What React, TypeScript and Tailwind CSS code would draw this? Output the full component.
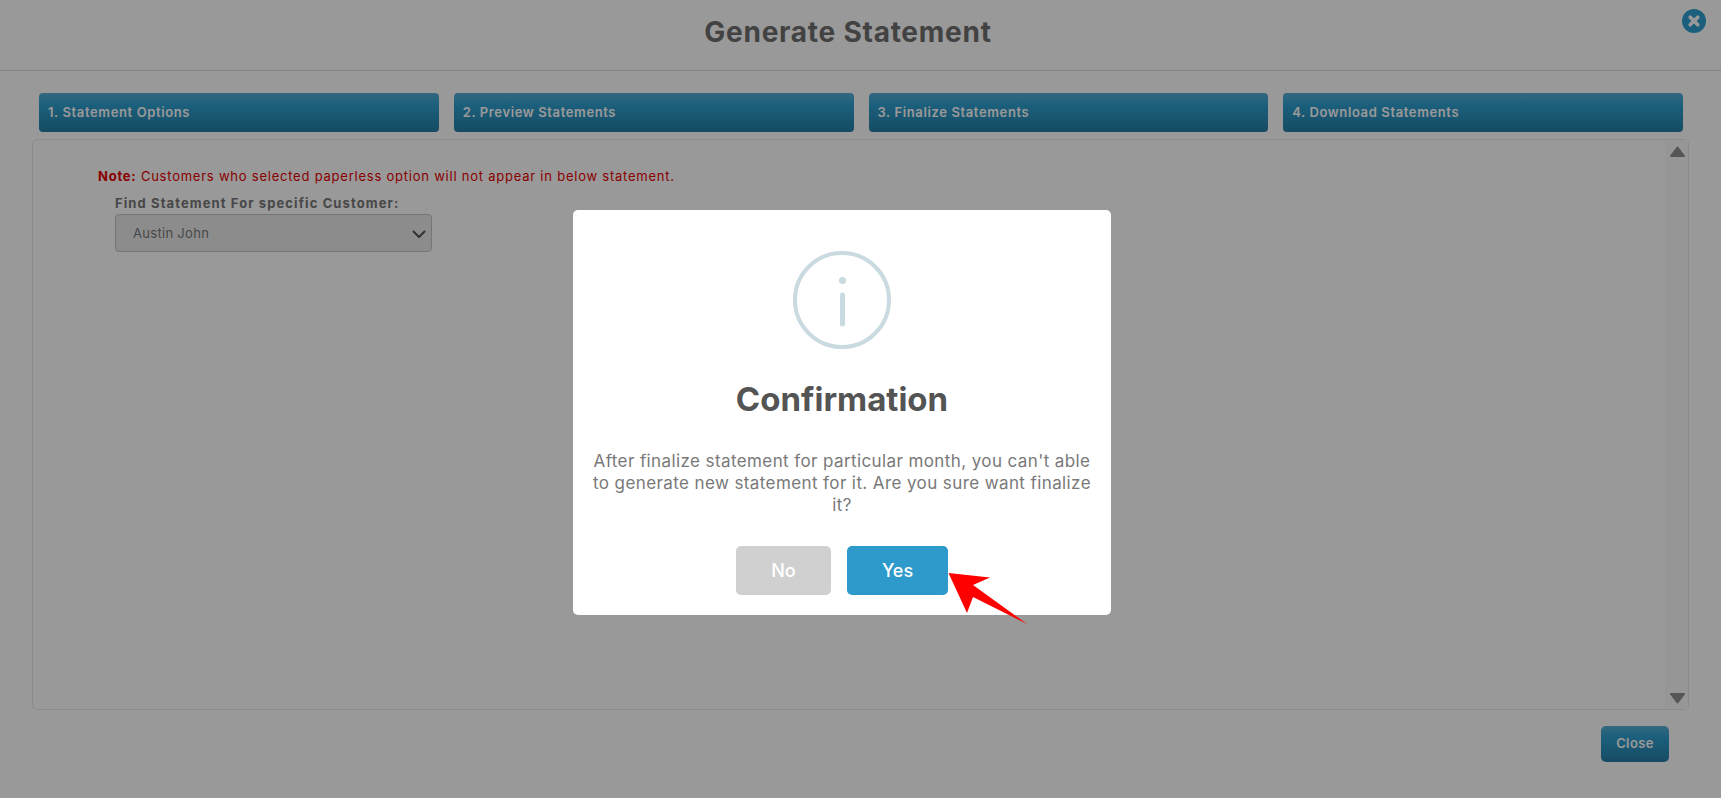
import React from "react";

const tabs = ["1. Statement Options", "2. Preview Statements", "3. Finalize Statements", "4. Download Statements"];

export default function App() {
  return (
    <div className="relative h-[798px] w-[1721px] overflow-hidden bg-white font-['Inter','Liberation_Sans',sans-serif] text-[#666]">
      <header className="flex h-[71px] items-start justify-center border-b border-[#d9d9d9] pt-[15px] pr-[25px]">
        <h1 className="text-[28px] leading-[34px] font-bold tracking-[0.75px] text-[#6f6f6f]">Generate Statement</h1>
        <button className="absolute top-[9px] left-[1682px] flex h-6 w-6 items-center justify-center rounded-full bg-[#2f9fd0]">
          <svg width="14" height="14" viewBox="0 0 14 14">
            <path d="M3.2 3.2 10.8 10.8M10.8 3.2 3.2 10.8" stroke="#fff" strokeWidth="3.6" strokeLinecap="round" />
          </svg>
        </button>
      </header>

      <div className="flex flex-col pt-[22px] pr-[32px] pl-[32px]">
        <div className="ml-[7px] mr-[6px] grid grid-cols-4 gap-[15px]">
          {tabs.map((t) => (
            <div
              key={t}
              className="flex h-[39px] items-center rounded-[4px] bg-gradient-to-b from-[#56aed4] via-[#2fa0d0] via-[30%] to-[#257da5] pl-[9px] text-[13px] font-semibold tracking-[0.62px] text-white"
            >
              {t}
            </div>
          ))}
        </div>

        <div className="mt-[7px] flex h-[571px] rounded-[5px] border border-[#e8e8e8]">
          <div className="flex-1 pt-[27px] pl-[65px]">
            <p className="text-[13px] leading-[18px] tracking-[0.77px] text-[#e60000]">
              <b className="font-bold">Note:</b> Customers who selected paperless option will not appear in below statement.
            </p>
            <div className="ml-[17px]">
              <label className="mt-[9px] block text-[13px] leading-[18px] font-bold tracking-[1.1px] text-[#777]">
                Find Statement For specific Customer:
              </label>
              <div className="mt-[2px] flex h-[38px] w-[317px] items-center justify-between rounded-[4px] border border-[#c4c4c4] bg-[#eaeaea] pt-[2px] pr-[5px] pl-[17px] text-[13px] text-[#777]">
                <span className="tracking-[0.3px]">Austin John</span>
                <svg width="14" height="14" viewBox="0 0 14 14" fill="none">
                  <path d="M1.5 4.5 7 10l5.5-5.5" stroke="#555" strokeWidth="2" strokeLinecap="round" strokeLinejoin="round" />
                </svg>
              </div>
            </div>
          </div>
          <div className="flex w-[23px] flex-col items-center justify-between bg-[#fbfbfb] pt-[6px] pb-[5px] pl-[1px]">
            <svg width="15" height="11" viewBox="0 0 15 11"><path d="M7.5 1.5 14 10H1Z" fill="#8f8f8f" stroke="#8f8f8f" strokeWidth="2" strokeLinejoin="round" /></svg>
            <svg width="15" height="11" viewBox="0 0 15 11"><path d="M1 1H14L7.5 9.5Z" fill="#8f8f8f" stroke="#8f8f8f" strokeWidth="2" strokeLinejoin="round" /></svg>
          </div>
        </div>

        <div className="flex justify-end pt-[16px] pr-[20px]">
          <button className="flex h-[36px] w-[68px] items-center justify-center rounded-[5px] bg-gradient-to-b from-[#56aed4] via-[#2fa0d0] via-[30%] to-[#257da5] text-[13px] font-semibold tracking-[0.4px] text-white">
            Close
          </button>
        </div>
      </div>

      <div className="absolute inset-0 flex items-start justify-center bg-black/40 pt-[210px] pr-[37px]">
        <div className="relative flex h-[405px] w-[538px] flex-col items-center rounded-[5px] bg-white px-[20px] pt-[41px]">
          <svg width="98" height="98" viewBox="0 0 98 98" fill="none">
            <circle cx="49" cy="49" r="47" stroke="#c9dae1" strokeWidth="4" />
            <circle cx="49.5" cy="29.5" r="3.6" fill="#c9dae1" />
            <line x1="49.5" y1="44" x2="49.5" y2="73" stroke="#c9dae1" strokeWidth="5" strokeLinecap="round" />
          </svg>
          <h2 className="mt-[30px] text-[33px] leading-[40px] font-bold text-[#545454]">Confirmation</h2>
          <p className="mt-[31px] w-[500px] text-center text-[17px] leading-[22px] tracking-[0.4px] text-[#797979]">
            After finalize statement for particular month, you can't able to generate new statement for it. Are you sure want finalize it?
          </p>
          <div className="mt-[30px] flex gap-[16px]">
            <button className="h-[49px] w-[95px] rounded-[5px] bg-[#d0d0d0] text-[18px] font-medium text-white">No</button>
            <button className="h-[49px] w-[101px] rounded-[5px] bg-[#2e9acb] text-[18px] font-medium text-white">Yes</button>
          </div>
        </div>
        <svg className="absolute top-[570px] left-[945px]" width="84" height="56" viewBox="0 0 84 56">
          <path d="M3.5 3 45 7.5 28 15 82 54 28 27 22 43Z" fill="#ff0000" />
        </svg>
      </div>
    </div>
  );
}
